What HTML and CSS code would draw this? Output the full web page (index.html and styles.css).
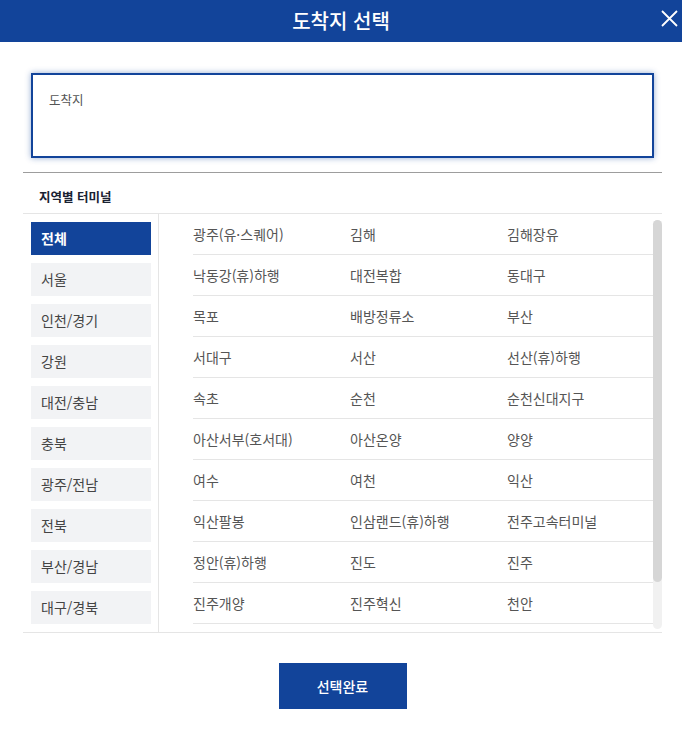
FILE: index.html
```html
<!DOCTYPE html>
<html lang="ko">
<head>
<meta charset="utf-8">
<title>도착지 선택</title>
<link rel="stylesheet" href="styles.css">
</head>
<body>
<div class="modal">
  <header class="modal-head">
    <h1 class="modal-title">도착지 선택</h1>
    <button class="close-btn" aria-label="닫기">
      <svg width="17" height="17" viewBox="0 0 17 17"><path d="M1 1L16 16M16 1L1 16" stroke="#fff" stroke-width="1.8" fill="none"/></svg>
    </button>
  </header>
  <div class="modal-body">
    <div class="search-wrap">
      <div class="search-box"><span class="placeholder">도착지</span></div>
    </div>
    <div class="section-title">지역별 터미널</div>
    <div class="panel">
      <ul class="regions">
        <li class="region active">전체</li>
        <li class="region">서울</li>
        <li class="region">인천/경기</li>
        <li class="region">강원</li>
        <li class="region">대전/충남</li>
        <li class="region">충북</li>
        <li class="region">광주/전남</li>
        <li class="region">전북</li>
        <li class="region">부산/경남</li>
        <li class="region">대구/경북</li>
      </ul>
      <div class="terminals">
        <div class="row"><span>광주(유·스퀘어)</span><span>김해</span><span>김해장유</span></div>
        <div class="row"><span>낙동강(휴)하행</span><span>대전복합</span><span>동대구</span></div>
        <div class="row"><span>목포</span><span>배방정류소</span><span>부산</span></div>
        <div class="row"><span>서대구</span><span>서산</span><span>선산(휴)하행</span></div>
        <div class="row"><span>속초</span><span>순천</span><span>순천신대지구</span></div>
        <div class="row"><span>아산서부(호서대)</span><span>아산온양</span><span>양양</span></div>
        <div class="row"><span>여수</span><span>여천</span><span>익산</span></div>
        <div class="row"><span>익산팔봉</span><span>인삼랜드(휴)하행</span><span>전주고속터미널</span></div>
        <div class="row"><span>정안(휴)하행</span><span>진도</span><span>진주</span></div>
        <div class="row"><span>진주개양</span><span>진주혁신</span><span>천안</span></div>
        <div class="scrollbar"><div class="scroll-thumb"></div></div>
      </div>
    </div>
    <div class="actions">
      <button class="confirm-btn">선택완료</button>
    </div>
  </div>
</div>
</body>
</html>
```
FILE: styles.css
```css
* { box-sizing: border-box; }
html, body { margin: 0; padding: 0; background: #fff; }
body {
  font-family: "Noto Sans CJK KR", "Noto Sans", sans-serif;
  color: #444;
}
.modal { width: 682px; }
.modal-head {
  height: 42px;
  background: #12449a;
  display: flex;
  align-items: center;
  justify-content: center;
  position: relative;
}
.modal-title {
  margin: 0;
  color: #fff;
  font-size: 20px;
  font-weight: 500;
  line-height: 42px;
  letter-spacing: 0;
}
.close-btn {
  position: absolute;
  right: 4px;
  top: 10px;
  width: 17px;
  height: 17px;
  padding: 0;
  border: 0;
  background: none;
  display: flex;
}
.modal-body {
  padding: 0 20px 0 23px;
}
.search-wrap {
  padding: 31px 8px 14px;
  border-bottom: 1px solid #9d9d9d;
}
.search-box {
  height: 85px;
  border: 2px solid #12449a;
  box-shadow: 0 0 6px rgba(18, 68, 154, 0.45);
  padding: 11px 16px;
}
.placeholder {
  font-size: 12.5px;
  color: #555;
  line-height: 18px;
}
.section-title {
  padding: 15px 16px 7px;
  font-size: 12.5px;
  font-weight: 700;
  line-height: 18px;
  color: #1a2233;
}
.panel {
  display: flex;
  border-top: 1px solid #e5e5e5;
  border-bottom: 1px solid #e5e5e5;
  height: 420px;
}
.regions {
  list-style: none;
  margin: 0;
  padding: 8px 7px 7px 8px;
  width: 136px;
  border-right: 1px solid #e5e5e5;
  display: flex;
  flex-direction: column;
  gap: 8px;
  flex: none;
}
.region {
  height: 33px;
  background: #f2f3f5;
  font-size: 14px;
  line-height: 33px;
  padding-left: 10px;
  color: #444;
}
.region.active {
  background: #12449a;
  color: #fff;
  font-weight: 700;
}
.terminals {
  flex: 1;
  margin-left: 34px;
  overflow: hidden;
  position: relative;
}
.scrollbar {
  position: absolute;
  right: 0;
  top: 6px;
  bottom: 3px;
  width: 9px;
  background: #f1f1f1;
  border-radius: 5px;
}
.scroll-thumb {
  height: 362px;
  background: #d6d6d6;
  border-radius: 5px;
}
.row {
  display: grid;
  grid-template-columns: 157px 157px 1fr;
  height: 41px;
  border-bottom: 1px solid #e5e5e5;
  align-items: center;
  font-size: 14px;
  color: #555;
}
.row span { line-height: 20px; padding-bottom: 1px; }
.actions {
  display: flex;
  justify-content: center;
  padding-top: 30px;
}
.confirm-btn {
  width: 128px;
  height: 46px;
  border: 0;
  background: #12449a;
  color: #fff;
  font-family: inherit;
  font-size: 14px;
  font-weight: 500;
}
```
